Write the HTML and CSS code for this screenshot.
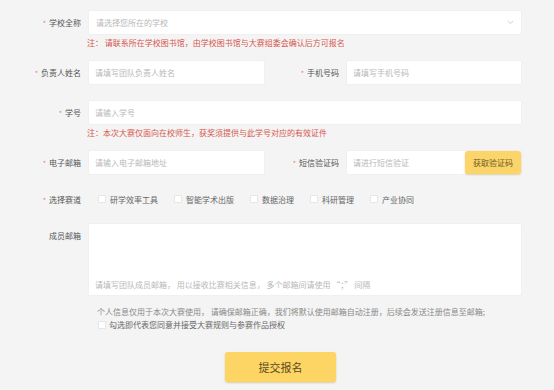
FILE: index.html
```html
<!DOCTYPE html>
<html>
  <head>
    <meta charset="utf-8" />
    <title>大赛报名</title>
    <link rel="stylesheet" href="styles.css">
  </head>
  <body>
    <form class="signup-form">
      <div class="field with-note">
        <div class="row">
          <label class="label"><i>*</i>学校全称</label>
          <div class="select-box">
            <span class="placeholder">请选择您所在的学校</span>
            <svg width="7" height="5" viewBox="0 0 7 5">
              <path d="M0.8 1 L3.5 3.6 L6.2 1" fill="none" stroke="#c8c8c8" stroke-width="0.9" />
            </svg>
          </div>
        </div>
        <p class="note">注： 请联系所在学校图书馆，由学校图书馆与大赛组委会确认后方可报名</p>
      </div>

      <div class="field">
        <div class="row">
          <label class="label"><i>*</i>负责人姓名</label>
          <input class="input half" type="text" placeholder="请填写团队负责人姓名" />
          <label class="label label-sm"><i>*</i>手机号码</label>
          <input class="input half-r" type="text" placeholder="请填写手机号码" />
        </div>
      </div>

      <div class="field with-note">
        <div class="row">
          <label class="label"><i>*</i>学号</label>
          <input class="input full" type="text" placeholder="请输入学号" />
        </div>
        <p class="note">注：本次大赛仅面向在校师生，获奖须提供与此学号对应的有效证件</p>
      </div>

      <div class="field">
        <div class="row">
          <label class="label"><i>*</i>电子邮箱</label>
          <input class="input half" type="text" placeholder="请输入电子邮箱地址" />
          <label class="label label-sm"><i>*</i>短信验证码</label>
          <div class="code-box">
            <input class="code-input" type="text" placeholder="请进行短信验证" />
            <button type="button" class="code-btn">获取验证码</button>
          </div>
        </div>
      </div>

      <div class="field">
        <div class="row row-checks">
          <label class="label"><i>*</i>选择赛道</label>
          <div class="checks">
            <label class="check"><span class="box"></span>研学效率工具</label>
            <label class="check"><span class="box"></span>智能学术出版</label>
            <label class="check"><span class="box"></span>数据治理</label>
            <label class="check"><span class="box"></span>科研管理</label>
            <label class="check"><span class="box"></span>产业协同</label>
          </div>
        </div>
      </div>

      <div class="field">
        <div class="row row-top">
          <label class="label">成员邮箱</label>
          <div class="textarea-box">
            <span class="placeholder">请填写团队成员邮箱， 用以接收比赛相关信息， 多个邮箱间请使用 “；” 间隔</span>
          </div>
        </div>
      </div>

      <div class="agreement">
        <p>个人信息仅用于本次大赛使用， 请确保邮箱正确，我们将默认使用邮箱自动注册，后续会发送注册信息至邮箱;</p>
        <label class="check"><span class="box"></span>勾选即代表您同意并接受大赛规则与参赛作品授权</label>
      </div>

      <div class="actions">
        <button type="button" class="submit-btn">提交报名</button>
      </div>
    </form>
  </body>
</html>
```

FILE: styles.css
```css
* {
  margin: 0;
  padding: 0;
  box-sizing: border-box;
}

body {
  width: 554px;
  height: 390px;
  overflow: hidden;
  background-color: #f4f4f4;
  font-family: "Noto Sans CJK SC", "Noto Sans", sans-serif;
  font-size: 8px;
  color: #555;
}

.signup-form {
  width: 522px;
  padding-top: 10px;
}

.field {
  margin-bottom: 15px;
}

.field.with-note .note {
  margin-bottom: -6px;
}

.row {
  display: flex;
  align-items: center;
  height: 25px;
}

.row-checks {
  height: 18px;
}

.row-top {
  align-items: flex-start;
  height: 73px;
}

.row-top .label {
  line-height: 25px;
}

.label {
  width: 81px;
  margin-right: 7px;
  text-align: right;
  color: #555;
  white-space: nowrap;
  flex-shrink: 0;
}

.label i {
  font-style: normal;
  color: #e08080;
  margin-right: 3px;
  font-size: 7px;
}

.label-sm {
  width: 74px;
}

.input,
.select-box,
.code-box,
.textarea-box {
  height: 25px;
  background-color: #fff;
  border: 1px solid #f0f0f0;
  border-radius: 2px;
  outline: none;
  font-family: inherit;
  font-size: 8px;
  color: #555;
}

.input {
  padding: 0 6px;
}

.input::placeholder,
.code-input::placeholder,
.placeholder {
  color: #b8b8b8;
}

.full {
  width: 434px;
}

.half {
  width: 177px;
}

.half-r {
  width: 176px;
}

.select-box {
  width: 434px;
  display: flex;
  align-items: center;
  justify-content: space-between;
  padding: 0 7px 0 7px;
}

.note {
  padding-left: 87px;
  line-height: 16px;
  color: #d6564f;
  white-space: nowrap;
}

.code-box {
  width: 176px;
  display: flex;
  align-items: center;
  justify-content: space-between;
  padding-left: 6px;
}

.code-input {
  flex: 1;
  min-width: 0;
  border: none;
  outline: none;
  background: transparent;
  font-family: inherit;
  font-size: 8px;
}

.code-btn {
  width: 56px;
  height: 23px;
  border: none;
  border-radius: 3px;
  background-color: #fbd56a;
  box-shadow: 0 1px 2px rgba(180, 140, 40, 0.35);
  color: #6d5a25;
  font-family: inherit;
  font-size: 8px;
  cursor: pointer;
}

.checks {
  display: flex;
  align-items: center;
  padding-left: 10px;
}

.check {
  display: flex;
  align-items: center;
  color: #666;
  margin-right: 16px;
  white-space: nowrap;
}

.box {
  width: 8px;
  height: 8px;
  background-color: #fff;
  border: 1px solid #e6e6e6;
  border-radius: 1px;
  margin-right: 4px;
}

.textarea-box {
  width: 434px;
  height: 73px;
  display: flex;
  flex-direction: column;
  justify-content: flex-end;
  padding: 0 6px 5px;
}

.agreement {
  margin-top: -6px;
  padding-left: 97px;
  color: #888;
  line-height: 13px;
}

.agreement .check {
  margin-left: 1px;
  color: #666;
}

.agreement .box {
  margin-right: 3px;
}

.actions {
  padding: 21px 0 0 225px;
}

.submit-btn {
  width: 111px;
  height: 30px;
  border: none;
  border-radius: 3px;
  background-color: #fcd565;
  box-shadow: 0 1px 2px rgba(180, 140, 40, 0.4);
  color: #5c4a1e;
  font-family: inherit;
  font-size: 11px;
  cursor: pointer;
}
```
